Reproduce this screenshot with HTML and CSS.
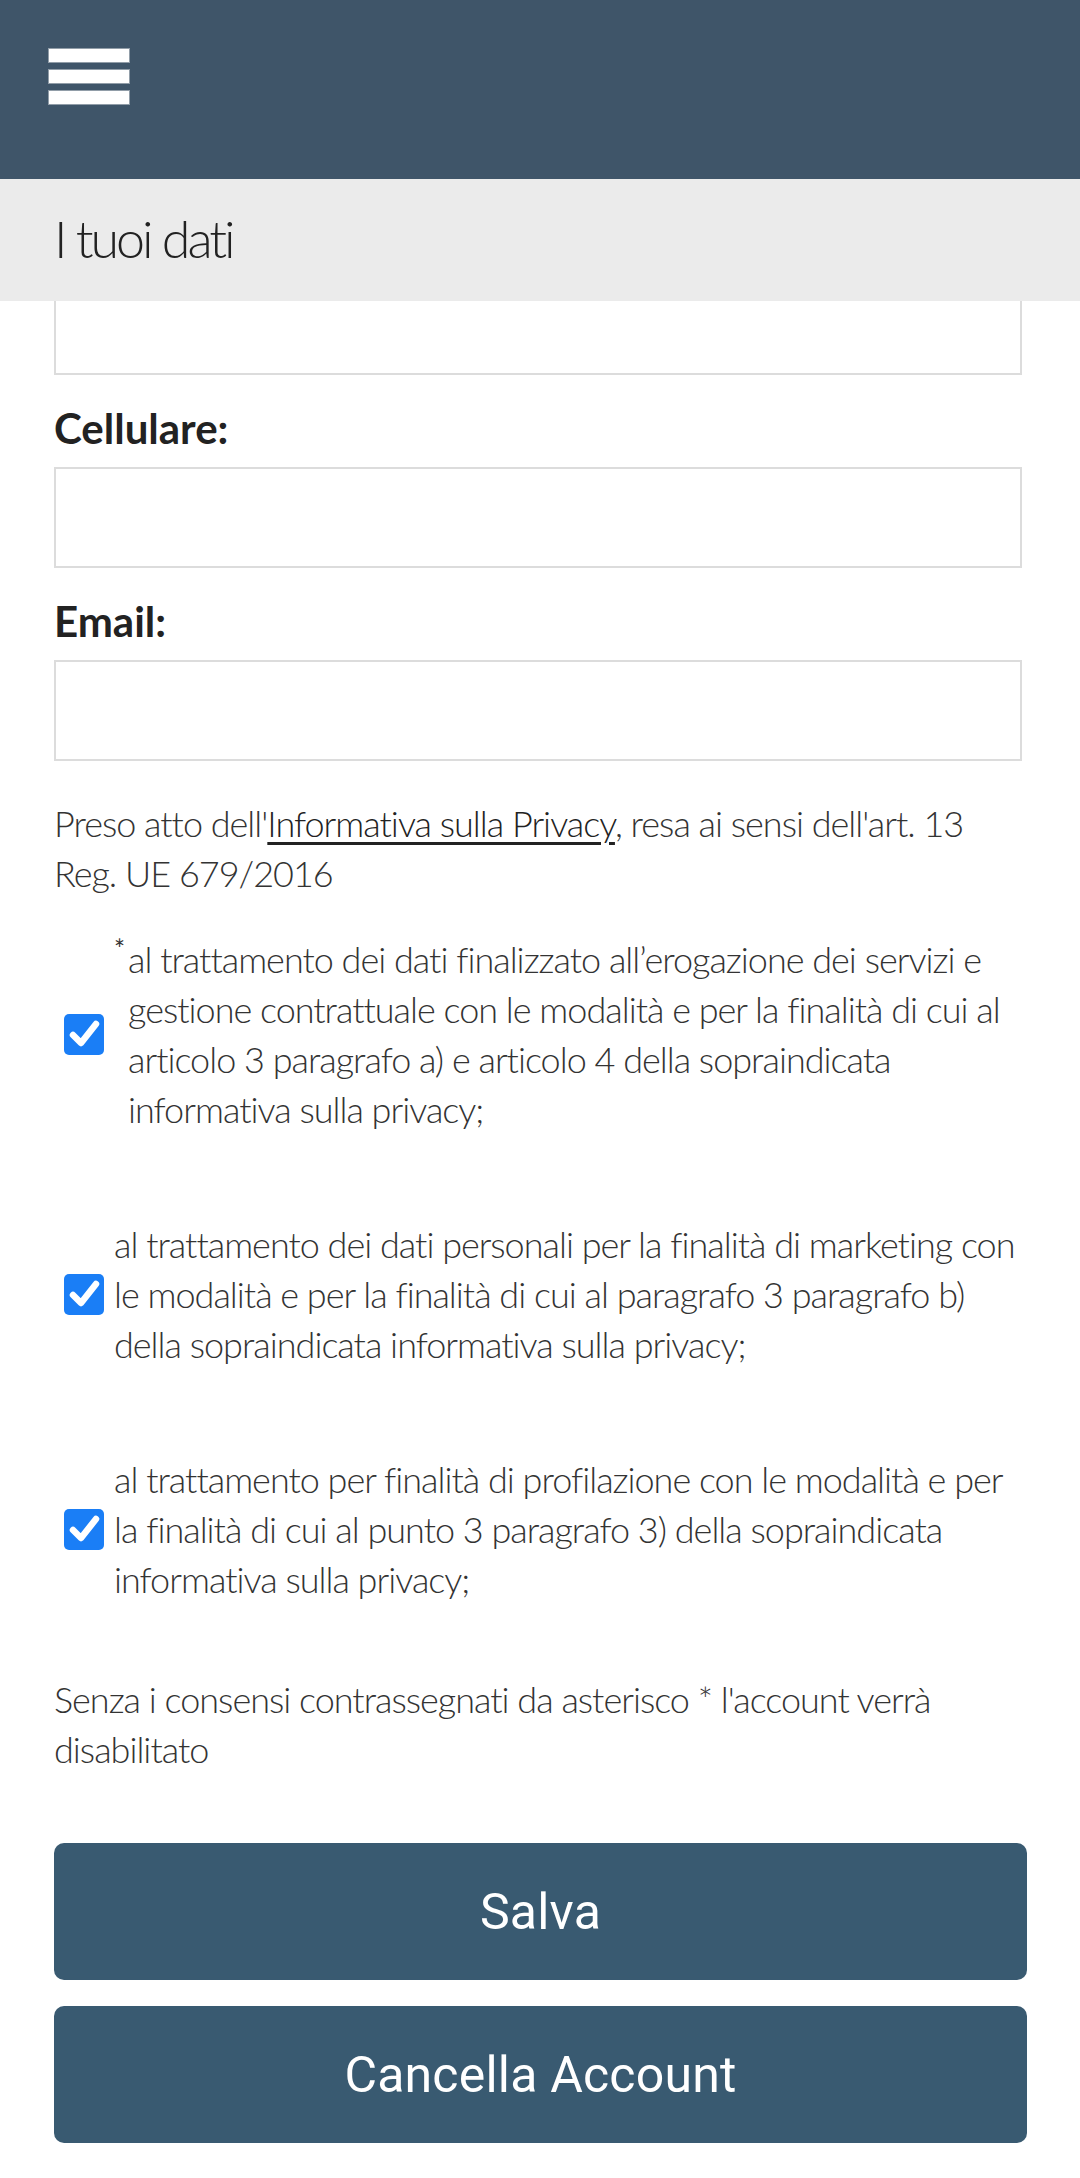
FILE: index.html
```html
<!DOCTYPE html>
<html lang="it">
<head>
<meta charset="utf-8">
<title>I tuoi dati</title>
<link rel="stylesheet" href="styles.css">
</head>
<body>
<header class="topbar">
  <div class="burger"><span></span><span></span><span></span></div>
</header>
<div class="subbar"><h1 class="title">I tuoi dati</h1></div>
<main class="content">
  <div class="field-tail"></div>
  <label class="label">Cellulare:</label>
  <div class="input"></div>
  <label class="label">Email:</label>
  <div class="input"></div>
  <p class="text privacy">Preso atto dell'<span class="link">Informativa sulla Privacy</span>, resa ai sensi dell'art. 13<br>Reg. UE 679/2016</p>
  <div class="consent">
    <span class="check"><svg viewBox="0 0 40 40" width="40" height="40"><path d="M9 21 L17 29 L32 10" fill="none" stroke="#fff" stroke-width="6.5" stroke-linecap="round" stroke-linejoin="round"/></svg></span>
    <sup class="star">*</sup>
    <span class="text consent-text">al trattamento dei dati finalizzato all’erogazione dei servizi e<br>gestione contrattuale con le modalità e per la finalità di cui al<br>articolo 3 paragrafo a) e articolo 4 della sopraindicata<br>informativa sulla privacy;</span>
  </div>
  <div class="consent">
    <span class="check"><svg viewBox="0 0 40 40" width="40" height="40"><path d="M9 21 L17 29 L32 10" fill="none" stroke="#fff" stroke-width="6.5" stroke-linecap="round" stroke-linejoin="round"/></svg></span>
    <span class="text consent-text">al trattamento dei dati personali per la finalità di marketing con<br>le modalità e per la finalità di cui al paragrafo 3 paragrafo b)<br>della sopraindicata informativa sulla privacy;</span>
  </div>
  <div class="consent">
    <span class="check"><svg viewBox="0 0 40 40" width="40" height="40"><path d="M9 21 L17 29 L32 10" fill="none" stroke="#fff" stroke-width="6.5" stroke-linecap="round" stroke-linejoin="round"/></svg></span>
    <span class="text consent-text">al trattamento per finalità di profilazione con le modalità e per<br>la finalità di cui al punto 3 paragrafo 3) della sopraindicata<br>informativa sulla privacy;</span>
  </div>
  <p class="text note">Senza i consensi contrassegnati da asterisco * l'account verrà<br>disabilitato</p>
  <div class="actions">
    <button class="btn">Salva</button>
    <button class="btn">Cancella Account</button>
  </div>
</main>
</body>
</html>
```

FILE: styles.css
```css
html, body {
  margin: 0;
  padding: 0;
  background: #fff;
}
body {
  width: 1080px;
  font-family: Lato, "Noto Sans", sans-serif;
  color: #333;
}
.topbar {
  height: 179px;
  background: #3f5569;
  padding: 49px 0 0 49px;
  box-sizing: border-box;
}
.burger {
  display: flex;
  flex-direction: column;
  gap: 8px;
  width: 80px;
}
.burger span {
  display: block;
  height: 13px;
  background: #fff;
  box-shadow: 0 0 0 1px rgba(200, 205, 210, 0.6);
}
.subbar {
  height: 122px;
  background: #ebebeb;
  display: flex;
  align-items: center;
  padding-left: 54px;
}
.title {
  margin: 0 0 4px;
  font-weight: 300;
  font-size: 52px;
  letter-spacing: -3px;
  line-height: 60px;
  color: #222;
}
.content {
  padding: 0 58px 60px 54px;
  display: flex;
  flex-direction: column;
}
.field-tail {
  height: 74px;
  border: 2px solid #dcdcdc;
  border-top: none;
  box-sizing: border-box;
}
.label {
  display: block;
  margin-top: 28px;
  font-size: 42px;
  font-weight: 700;
  line-height: 50px;
  color: #222;
}
.input {
  margin-top: 14px;
  height: 101px;
  border: 2px solid #dcdcdc;
  box-sizing: border-box;
}
.text {
  font-size: 36px;
  font-weight: 300;
  letter-spacing: -1px;
  line-height: 50px;
  color: #333;
  white-space: nowrap;
}
.privacy {
  margin: 37px 0 0;
}
.link {
  text-decoration: underline;
  text-decoration-thickness: 3px;
  text-underline-offset: 5px;
  color: #222;
}
.consent {
  display: flex;
  align-items: center;
  margin-top: 85px;
}
.privacy + .consent {
  margin-top: 36px;
}
.check {
  flex: none;
  width: 40px;
  height: 41px;
  margin: 0 10px;
  background: #1a7ef6;
  border-radius: 5px;
  display: flex;
  align-items: center;
  justify-content: center;
}
.star {
  align-self: flex-start;
  width: 14px;
  flex: none;
  font-size: 26px;
  line-height: 26px;
  font-weight: 400;
  color: #333;
  margin-top: 2px;
}
.consent-text {
  flex: 1;
}
.note {
  margin: 70px 0 0;
}
.actions {
  margin-top: 69px;
  margin-right: -5px;
  display: flex;
  flex-direction: column;
  gap: 26px;
}
.btn {
  height: 137px;
  border: none;
  border-radius: 10px;
  background: #395a71;
  color: #fff;
  font-family: Roboto, "Noto Sans", sans-serif;
  font-size: 50px;
  letter-spacing: 0.2px;
  font-weight: 400;
  display: flex;
  align-items: center;
  justify-content: center;
  padding: 0;
}
```
